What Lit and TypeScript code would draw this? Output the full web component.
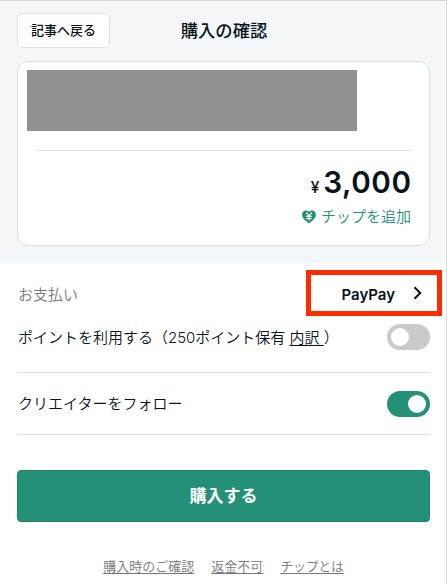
import { LitElement, html, css, svg } from "lit";
import { customElement, property } from "lit/decorators.js";
import { classMap } from "lit/directives/class-map.js";

@customElement("toggle-switch")
class ToggleSwitch extends LitElement {
  @property({ type: Boolean }) on = false;

  static styles = css`
    :host { display: block; flex: none; }
    .track {
      display: flex;
      box-sizing: border-box;
      width: 43px;
      height: 26px;
      padding: 4px;
      border-radius: 13px;
      background: #c8cacb;
    }
    .track.on { justify-content: flex-end; background: #249077; }
    .knob { width: 18px; height: 18px; border-radius: 50%; background: #fff; }
  `;

  render() {
    return html`<div class=${classMap({ track: true, on: this.on })} role="switch" aria-checked=${this.on}>
      <div class="knob"></div>
    </div>`;
  }
}

const heartYen = svg`
  <path fill="#249077" d="M7 13.500 C3.800 11.200 .1 8.400 .1 4.600 C.1 2.100 1.900 .6 4 .6 C5.300 .6 6.400 1.200 7 2 C7.600 1.200 8.700 .6 10 .6 C12.100 .6 13.900 2.100 13.900 4.600 C13.900 8.400 10.200 11.200 7 13.500Z"/>
  <path fill="none" stroke="#fff" stroke-width="1.200" d="M4.300 2.700 L7 6 L9.700 2.700 M7 6 V10.600 M4.200 6.300 H9.800 M4.200 8.500 H9.800"/>`;

@customElement("app-root")
class AppRoot extends LitElement {
  static styles = css`
    :host {
      display: block;
      box-sizing: border-box;
      width: 447px;
      height: 584px;
      overflow: hidden;
      background: #fff;
      border-top: 1px solid #d3d6d9;
      border-right: 1px solid #d9dbdd;
      color: #08131a;
      font-family: Inter, "Noto Sans CJK JP", sans-serif;
      font-size: 15px;
      line-height: 20px;
      white-space: nowrap;
    }
    .summary { height: 262px; box-sizing: border-box; padding: 12px 16px 0 17px; background: #f3f7fa; }
    .bar { display: grid; grid-template-columns: 93px 1fr 93px; align-items: center; height: 35px; }
    .back {
      box-sizing: border-box;
      height: 35px;
      padding: 0;
      border: 1px solid #dfe1e4;
      border-radius: 5px;
      background: #fff;
      color: inherit;
      font: 500 13px/31px Inter, "Noto Sans CJK JP", sans-serif;
    }
    h1 { margin: 0; padding-left: 1px; text-align: center; font-size: 17.300px; font-weight: 500; line-height: 34px; }
    .card {
      box-sizing: border-box;
      height: 185px;
      margin-top: 13px;
      padding: 8px 18px 0 9px;
      border: 1px solid #dcdfe1;
      border-radius: 11px;
      background: #fff;
    }
    .item { width: 330px; height: 61px; background: #919191; }
    .rule { height: 1px; background: #dedfe0; }
    .card .rule { margin: 19px 0 0 9px; }
    .price { display: flex; justify-content: flex-end; align-items: baseline; height: 36px; margin-top: 13px; font-weight: 600; }
    .yen { margin-right: 4px; font-size: 15.500px; font-weight: 500; }
    .amount { font-size: 29.700px; line-height: 36px; letter-spacing: 0.500px; margin-right: -0.500px; }
    .tip { display: flex; justify-content: flex-end; align-items: center; gap: 5px; margin-top: 7px; color: #249077; font-weight: 350; }
    .tip svg { margin-top: -1px; }
    .body { padding: 7px 16px 0 18px; }
    .row { display: flex; justify-content: space-between; align-items: center; }
    .label { padding-top: 4px; color: #747b7f; font-weight: 350; }
    .method {
      display: flex;
      align-items: center;
      justify-content: flex-end;
      box-sizing: border-box;
      width: 136px;
      height: 46px;
      margin-right: -12px;
      padding: 3px 15px 0 0;
      border: 5px solid #ff2a00;
      font-weight: 600;
    }
    .method svg { margin: -4px 0 0 18px; }
    .points { height: 26px; margin-top: 8px; font-weight: 350; }
    .points > span { padding-top: 2px; }
    .points u { text-underline-offset: 2px; text-decoration-thickness: 1px; }
    .body > .rule { margin-left: -1px; }
    .points + .rule { margin-top: 22px; }
    .follow { height: 61px; font-weight: 350; }
    .follow > span { padding-top: 1px; }
    .buy {
      display: block;
      box-sizing: border-box;
      width: 413px;
      height: 52px;
      margin: 35px 0 0 -1px;
      border: 1px solid #168568;
      border-radius: 4px;
      background: #249077;
      color: #fff;
      font: 700 17px/48px Inter, "Noto Sans CJK JP", sans-serif;
    }
    .links { display: flex; justify-content: center; gap: 17px; margin: 34px 1px 0 0; font-size: 13px; font-weight: 350; color: #72797d; }
    .links span { text-decoration: underline; text-underline-offset: 2px; text-decoration-thickness: 1px; }
    .links span:last-child { letter-spacing: -0.300px; }
  `;

  render() {
    return html`
      <section class="summary">
        <header class="bar">
          <button class="back">記事へ戻る</button>
          <h1>購入の確認</h1>
        </header>
        <div class="card">
          <div class="item"></div>
          <div class="rule"></div>
          <div class="price"><span class="yen">¥</span><span class="amount">3,000</span></div>
          <div class="tip">
            <svg width="14" height="14" viewBox="0 0 14 14">${heartYen}</svg>
            <span>チップを追加</span>
          </div>
        </div>
      </section>
      <section class="body">
        <div class="row">
          <span class="label">お支払い</span>
          <div class="method">
            <span>PayPay</span>
            <svg width="9" height="14" viewBox="0 0 9 14"><path d="M1.500 1.300 L7.200 7 L1.500 12.700" fill="none" stroke="#08131a" stroke-width="2"/></svg>
          </div>
        </div>
        <div class="row points">
          <span>ポイントを利用する（250ポイント保有 <u>内訳 </u>）</span>
          <toggle-switch></toggle-switch>
        </div>
        <div class="rule"></div>
        <div class="row follow">
          <span>クリエイターをフォロー</span>
          <toggle-switch on></toggle-switch>
        </div>
        <div class="rule"></div>
        <button class="buy">購入する</button>
        <nav class="links"><span>購入時のご確認</span><span>返金不可</span><span>チップとは</span></nav>
      </section>
    `;
  }
}
